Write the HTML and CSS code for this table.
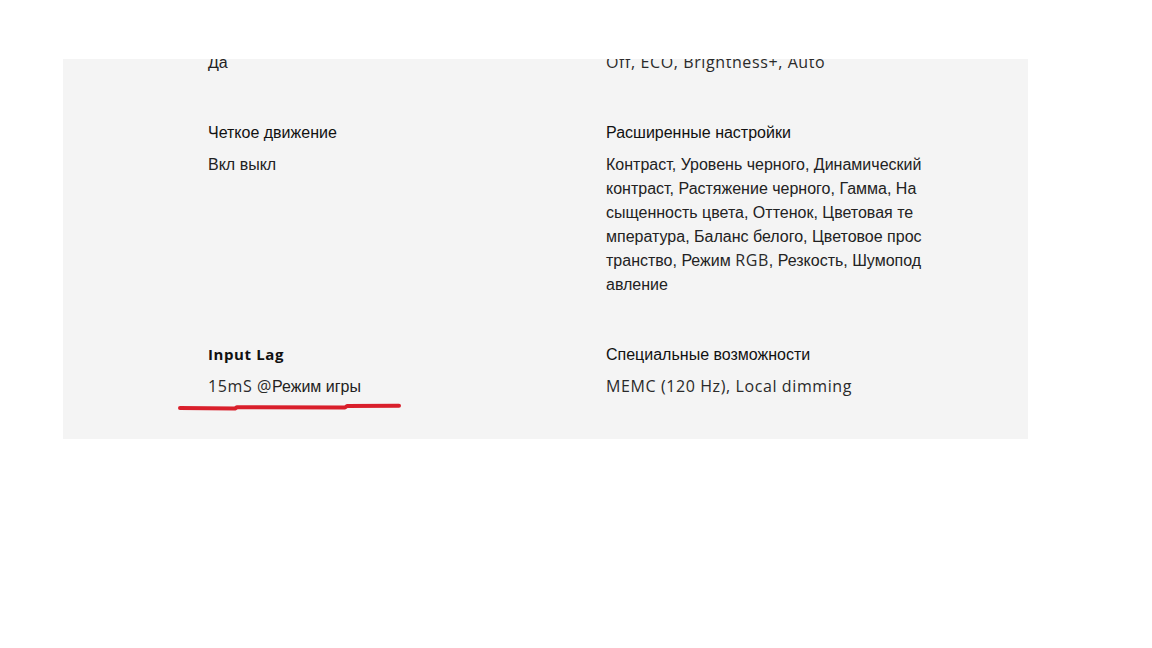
FILE: index.html
```html
<!DOCTYPE html>
<html lang="ru">
<head>
<meta charset="utf-8">
<title>Характеристики</title>
<link rel="stylesheet" href="styles.css">
</head>
<body>
<div class="page">
  <section class="specs">
    <div class="row first">
      <div class="cell">
        <div class="label">Скрыто</div>
        <div class="value">Да</div>
      </div>
      <div class="cell">
        <div class="label">Скрыто</div>
        <div class="value"><span class="lat">Off, ECO, Brightness+, Auto</span></div>
      </div>
    </div>
    <div class="row">
      <div class="cell">
        <div class="label">Четкое движение</div>
        <div class="value">Вкл выкл</div>
      </div>
      <div class="cell">
        <div class="label">Расширенные настройки</div>
        <div class="value">Контраст, Уровень черного, Динамический<br>контраст, Растяжение черного, Гамма, На<br>сыщенность цвета, Оттенок, Цветовая те<br>мпература, Баланс белого, Цветовое прос<br>транство, Режим <span class="lat">RGB</span>, Резкость, Шумопод<br>авление</div>
      </div>
    </div>
    <div class="row">
      <div class="cell marked">
        <div class="label"><span class="lat bold">Input Lag</span></div>
        <div class="value"><span class="lat">15mS @</span>Режим игры</div>
        <svg class="scribble" width="230" height="14" viewBox="0 0 230 14">
          <path d="M3 9 L58 9.5 L60 8.2 L168 8.5 L170 7 L222 6.8" fill="none" stroke="#d91f2b" stroke-width="4" stroke-linecap="round" stroke-linejoin="round"/>
        </svg>
      </div>
      <div class="cell">
        <div class="label">Специальные возможности</div>
        <div class="value"><span class="lat">MEMC (120 Hz), Local dimming</span></div>
      </div>
    </div>
  </section>
</div>
</body>
</html>
```

FILE: styles.css
```css
html, body {
  margin: 0;
  padding: 0;
  background: #ffffff;
}
.page {
  padding: 59px 0 0 63px;
  width: 965px;
}
.specs {
  background: #f4f4f4;
  overflow: hidden;
  padding: 0 0 40px 145px;
  display: flex;
  flex-direction: column;
  gap: 46px;
  font-family: "Liberation Sans", Arial, sans-serif;
  font-size: 16px;
  color: #1a1a1a;
}
.row {
  display: grid;
  grid-template-columns: 398px 1fr;
}
.row.first {
  margin-top: -40px;
}
.cell {
  position: relative;
}
.label {
  height: 24px;
  line-height: 24px;
  margin-bottom: 8px;
  color: #111111;
}
.value {
  line-height: 24px;
  color: #222222;
}
.lat {
  font-family: "Open Sans", "DejaVu Sans", sans-serif;
  font-size: 16px;
  line-height: 16px;
  letter-spacing: 0.6px;
  color: #2a2a2a;
}
.bold {
  font-weight: 700;
  font-size: 15px;
  letter-spacing: 0.6px;
  color: #111111;
}
.scribble {
  position: absolute;
  left: -31px;
  top: 56px;
}
```
